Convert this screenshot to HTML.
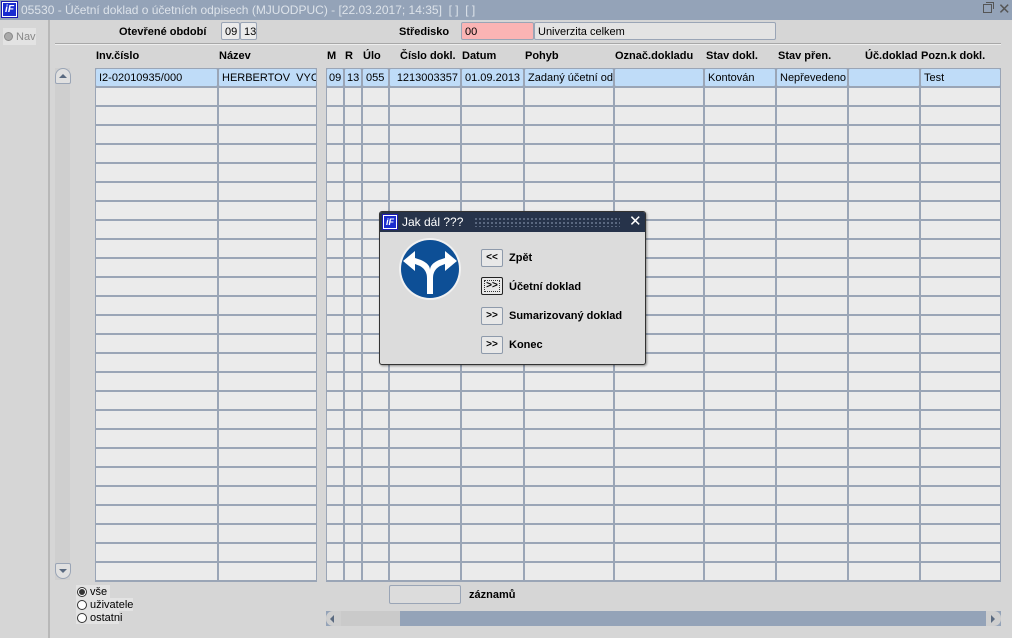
<!DOCTYPE html>
<html><head><meta charset="utf-8"><style>
*{margin:0;padding:0;box-sizing:border-box}
body{width:1012px;height:638px;background:#d6d6d6;font-family:"Liberation Sans",Arial,sans-serif;font-size:11px;color:#000;position:relative;overflow:hidden}
.a{position:absolute}
.t{position:absolute;font-weight:bold;font-size:11px;white-space:nowrap}
.col{position:absolute;top:68px;height:514px;background:repeating-linear-gradient(to bottom,#9aa5b6 0 1px,#ebebeb 1px 18px,#9aa5b6 18px 19px);border-left:1px solid #9aa5b6;border-right:1px solid #9aa5b6}
.sel{position:absolute;top:68px;height:19px;background:#bfdcf8;border:1px solid #9aa5b6;border-radius:2px;padding:3px 0 0 3px;white-space:nowrap;overflow:hidden}
.fld{position:absolute;background:#ebebeb;border:1px solid #9aa5b6;border-radius:2px;padding:3px 0 0 3px;white-space:nowrap}
.btn{position:absolute;left:481px;width:22px;height:18px;background:#e8e8e8;border:1px solid #8e9aab;border-radius:2px;font-size:10px;font-weight:bold;text-align:center;line-height:15px}
.bl{position:absolute;left:509px;font-weight:bold;font-size:11px}
.rad{position:absolute;left:77px;width:10px;height:10px;border:1px solid #333;border-radius:50%;background:#fff}
</style></head><body>
<!-- title bar -->
<div class="a" style="left:0;top:0;width:1012px;height:20px;background:#94a3b8"></div>
<div class="a" style="left:1px;top:1px;width:17px;height:17px;background:#fff;border:1px solid #1a1ab0"><div style="position:absolute;left:1px;top:1px;width:13px;height:13px;background:#1a2ccf;color:#fff;font-weight:bold;font-style:italic;font-size:10px;line-height:13px;text-align:center">iF</div></div>
<div class="a" style="left:21px;top:3px;color:#dde3ea;font-size:12px;white-space:nowrap">05530 - Účetní doklad o účetních odpisech (MJUODPUC) - [22.03.2017; 14:35]&nbsp; [ ]&nbsp; [ ]</div>
<div class="a" style="left:983px;top:4px;width:9px;height:9px;border:1px solid #555"></div>
<div class="a" style="left:986px;top:2px;width:8px;height:7px;border:1px solid #555;border-bottom:none;border-left:none"></div>
<div class="a" style="left:998px;top:0px;font-size:15px;color:#555">✕</div>
<!-- left panel -->
<div class="a" style="left:48px;top:20px;width:2px;height:618px;background:#b8b8b8"></div>
<div class="a" style="left:3px;top:28px;width:33px;height:17px;background:#e3e3e3"></div>
<div class="a" style="left:4px;top:32px;width:9px;height:9px;border-radius:50%;background:#aaa;border:1px solid #888"></div>
<div class="a" style="left:16px;top:31px;color:#888;font-size:11px">Nav</div>
<!-- header fields -->
<div class="t" style="left:119px;top:26px">Otevřené období</div>
<div class="fld" style="left:221px;top:22px;width:19px;height:18px">09</div>
<div class="fld" style="left:240px;top:22px;width:17px;height:18px">13</div>
<div class="t" style="left:399px;top:26px">Středisko</div>
<div class="fld" style="left:461px;top:22px;width:73px;height:18px;background:#fbb4b4">00</div>
<div class="fld" style="left:534px;top:22px;width:242px;height:18px;background:#e3e3e3">Univerzita celkem</div>
<div class="a" style="left:55px;top:43px;width:946px;height:2px;background:#a8a8a8;border-bottom:1px solid #eee"></div>
<!-- column headers -->
<div class="t" style="left:96px;top:50px">Inv.číslo</div>
<div class="t" style="left:219px;top:50px">Název</div>
<div class="t" style="left:327px;top:50px">M</div>
<div class="t" style="left:345px;top:50px">R</div>
<div class="t" style="left:363px;top:50px">Úlo</div>
<div class="t" style="left:400px;top:50px">Číslo dokl.</div>
<div class="t" style="left:462px;top:50px">Datum</div>
<div class="t" style="left:525px;top:50px">Pohyb</div>
<div class="t" style="left:615px;top:50px">Označ.dokladu</div>
<div class="t" style="left:706px;top:50px">Stav dokl.</div>
<div class="t" style="left:778px;top:50px">Stav přen.</div>
<div class="t" style="left:865px;top:50px">Úč.doklad</div>
<div class="t" style="left:921px;top:50px">Pozn.k dokl.</div>
<!-- vertical scrollbar -->
<div class="a" style="left:55px;top:68px;width:15px;height:512px;background:#cfcfcf"></div>
<div class="a" style="left:55px;top:68px;width:16px;height:16px;background:#e0e0e0;border:1px solid #9aa5b6;border-radius:8px 8px 2px 2px"><div style="position:absolute;left:3px;top:5px;border-left:4px solid transparent;border-right:4px solid transparent;border-bottom:4px solid #5a6a80"></div></div>
<div class="a" style="left:55px;top:563px;width:16px;height:16px;background:#e0e0e0;border:1px solid #9aa5b6;border-radius:2px 2px 8px 8px"><div style="position:absolute;left:3px;top:5px;border-left:4px solid transparent;border-right:4px solid transparent;border-top:4px solid #5a6a80"></div></div>
<!-- grid columns -->
<div class="col" style="left:95px;width:123px"></div>
<div class="col" style="left:218px;width:99px"></div>
<div class="col" style="left:326px;width:18px"></div>
<div class="col" style="left:344px;width:18px"></div>
<div class="col" style="left:362px;width:27px"></div>
<div class="col" style="left:389px;width:72px"></div>
<div class="col" style="left:461px;width:63px"></div>
<div class="col" style="left:524px;width:90px"></div>
<div class="col" style="left:614px;width:90px"></div>
<div class="col" style="left:704px;width:72px"></div>
<div class="col" style="left:776px;width:72px"></div>
<div class="col" style="left:848px;width:72px"></div>
<div class="col" style="left:920px;width:81px"></div>
<!-- selected row -->
<div class="sel" style="left:95px;width:123px">I2-02010935/000</div>
<div class="sel" style="left:218px;width:99px">HERBERTOV&nbsp; VYCV</div>
<div class="sel" style="left:326px;width:18px;padding-left:2px">09</div>
<div class="sel" style="left:344px;width:18px;padding-left:2px">13</div>
<div class="sel" style="left:362px;width:27px">055</div>
<div class="sel" style="left:389px;width:72px;text-align:right;padding-right:2px">1213003357</div>
<div class="sel" style="left:461px;width:63px">01.09.2013</div>
<div class="sel" style="left:524px;width:90px">Zadaný účetní od</div>
<div class="sel" style="left:614px;width:90px"></div>
<div class="sel" style="left:704px;width:72px">Kontován</div>
<div class="sel" style="left:776px;width:72px">Nepřevedeno</div>
<div class="sel" style="left:848px;width:72px"></div>
<div class="sel" style="left:920px;width:81px">Test</div>
<!-- bottom -->
<div class="a" style="left:76px;top:585px;width:34px;height:13px;background:#e3e3e3"></div>
<div class="a" style="left:76px;top:598px;width:57px;height:13px;background:#e3e3e3"></div>
<div class="a" style="left:76px;top:611px;width:43px;height:13px;background:#e3e3e3"></div>
<div class="rad" style="top:587px"><div style="position:absolute;left:1px;top:1px;width:6px;height:6px;border-radius:50%;background:#333"></div></div>
<div class="rad" style="top:600px"></div>
<div class="rad" style="top:613px"></div>
<div class="a" style="left:90px;top:586px">vše</div>
<div class="a" style="left:90px;top:599px">uživatele</div>
<div class="a" style="left:90px;top:612px">ostatni</div>
<div class="a" style="left:389px;top:585px;width:72px;height:19px;background:#dcdcdc;border:1px solid #9aa5b6;border-radius:2px"></div>
<div class="t" style="left:469px;top:589px">záznamů</div>
<div class="a" style="left:326px;top:611px;width:675px;height:15px;background:#94a3b8"></div>
<div class="a" style="left:326px;top:611px;width:15px;height:15px;background:#cfcfcf;border-radius:7px 0 0 7px"><div style="position:absolute;left:4px;top:4px;border-top:4px solid transparent;border-bottom:4px solid transparent;border-right:4px solid #5a6a80"></div></div>
<div class="a" style="left:341px;top:611px;width:59px;height:15px;background:#cacaca"></div>
<div class="a" style="left:986px;top:611px;width:15px;height:15px;background:#cfcfcf;border-radius:0 7px 7px 0"><div style="position:absolute;left:5px;top:4px;border-top:4px solid transparent;border-bottom:4px solid transparent;border-left:4px solid #5a6a80"></div></div>
<!-- dialog -->
<div class="a" style="left:379px;top:211px;width:267px;height:154px;background:#dcdcdc;border:1px solid #333;border-radius:3px;box-shadow:1px 1px 2px rgba(0,0,0,.4)"></div>
<div class="a" style="left:380px;top:212px;width:265px;height:20px;background:#26334a;border-radius:2px 2px 0 0"></div>
<div class="a" style="left:382px;top:214px;width:16px;height:16px;background:#fff;border:1px solid #1a1ab0"><div style="position:absolute;left:1px;top:1px;width:12px;height:12px;background:#1a2ccf;color:#fff;font-weight:bold;font-style:italic;font-size:9px;line-height:12px;text-align:center">iF</div></div>
<div class="a" style="left:402px;top:215px;color:#fff;font-size:12px">Jak dál ???</div>
<div class="a" style="left:474px;top:217px;width:146px;height:10px;background-image:radial-gradient(#6b7a92 0.8px,transparent 1px);background-size:4px 4px"></div>
<div class="a" style="left:629px;top:212px;color:#fff;font-size:15px">✕</div>
<svg class="a" style="left:397px;top:238px" width="66" height="64" viewBox="0 0 66 64">
<circle cx="33" cy="31" r="31" fill="#fff" opacity=".6"/>
<circle cx="33" cy="31" r="29" fill="#0d4f96"/>
<path d="M30 56 L30 40 Q30 32 23 28 L18 26 L18 33 L6 23 L18 13 L18 20 L24 22 Q33 26 33 32 Q33 26 42 22 L48 20 L48 13 L60 23 L48 33 L48 26 L43 28 Q36 32 36 40 L36 56 Z" fill="#fff"/>
</svg>
<div class="btn" style="top:249px">&lt;&lt;</div>
<div class="bl" style="top:252px">Zpět</div>
<div class="btn" style="top:277px;border:1px solid #222;outline:1px dotted #333;outline-offset:-4px">&gt;&gt;</div>
<div class="bl" style="top:281px">Účetní doklad</div>
<div class="btn" style="top:307px">&gt;&gt;</div>
<div class="bl" style="top:310px">Sumarizovaný doklad</div>
<div class="btn" style="top:336px">&gt;&gt;</div>
<div class="bl" style="top:339px">Konec</div>
</body></html>
